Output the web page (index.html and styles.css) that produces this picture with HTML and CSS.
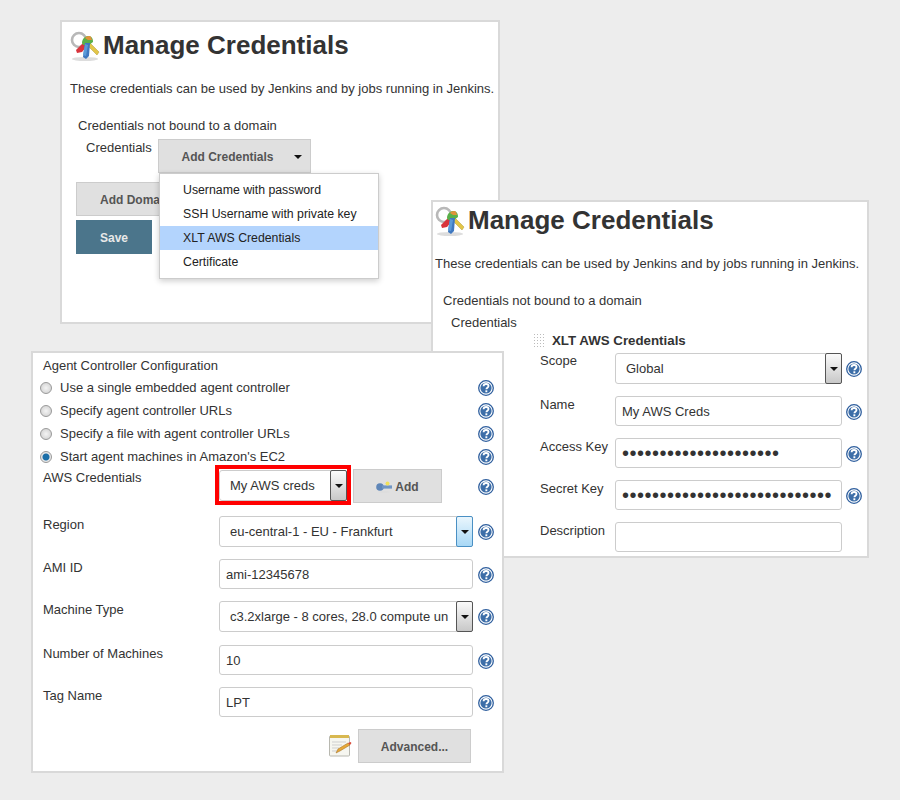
FILE: index.html
```html
<!DOCTYPE html>
<html lang="en">

<head>
    <meta charset="UTF-8">
    <title>Manage Credentials</title>
    <link rel="stylesheet" href="styles.css">
</head>

<body>

    <svg class="defs" width="0" height="0">
        <symbol id="help" viewBox="0 0 16 16">
            <circle cx="8" cy="8" r="7.3" fill="#fff" stroke="#2f5f9e" stroke-width="1.3" />
            <circle cx="8" cy="8" r="5.6" fill="#3d6ea8" />
            <path d="M5.6 6.3c0-1.5 1.1-2.3 2.5-2.3s2.4.8 2.4 2c0 1.8-2.1 1.7-2.1 3.3" fill="none" stroke="#fff" stroke-width="1.8" />
            <rect x="7.4" y="10.3" width="1.9" height="1.9" fill="#fff" />
        </symbol>
        <symbol id="keys" viewBox="0 0 32 32">
            <ellipse cx="15" cy="30" rx="13" ry="2" fill="#ddd" />
            <circle cx="9" cy="11" r="7" fill="none" stroke="#b8b8b8" stroke-width="2.6" />
            <path d="M20 14l9 9-2 3-9-9z" fill="#e3c648" stroke="#b09a30" stroke-width=".5" />
            <path d="M14 13l-8 8 1 3 5-1 6-7z" fill="#d8343c" />
            <path d="M12 14c0-4 3-7 6-7 4 0 5 3 5 6l-4 3-6 0z" fill="#5ab04a" />
            <path d="M15 9c1-2 5-3 6-1l1 3-4 0z" fill="#e0923a" />
            <path d="M15 14l5 0 -1 13-3 3-3-2z" fill="#3f78c0" />
            <path d="M15 15l3 1-2 11-3-1z" fill="#5a9ad8" />
        </symbol>
    </svg>

    <main class="canvas">

        <section class="panel panel-add">
            <h1 class="title"><svg class="title-icon"><use href="#keys" /></svg>Manage Credentials</h1>
            <p class="desc">These credentials can be used by Jenkins and by jobs running in Jenkins.</p>
            <p class="domain">Credentials not bound to a domain</p>
            <div class="cred-line">
                <span class="cred-label">Credentials</span>
                <button class="btn btn-menu" type="button">Add Credentials<span class="caret"></span></button>
            </div>
            <button class="btn btn-domain" type="button">Add Domain</button>
            <button class="btn btn-save" type="button">Save</button>
            <ul class="menu">
                <li>Username with password</li>
                <li>SSH Username with private key</li>
                <li class="active">XLT AWS Credentials</li>
                <li>Certificate</li>
            </ul>
        </section>

        <section class="panel panel-form">
            <h1 class="title"><svg class="title-icon"><use href="#keys" /></svg>Manage Credentials</h1>
            <p class="desc">These credentials can be used by Jenkins and by jobs running in Jenkins.</p>
            <p class="domain">Credentials not bound to a domain</p>
            <div class="cred-line">
                <span class="cred-label">Credentials</span>
            </div>
            <div class="form">
                <div class="form-head"><span class="grip"></span>XLT AWS Credentials</div>
                <div class="field">
                    <label>Scope</label>
                    <div class="select"><span>Global</span><span class="arrow"><span class="caret"></span></span></div>
                    <svg class="help"><use href="#help" /></svg>
                </div>
                <div class="field">
                    <label>Name</label>
                    <input class="input" type="text" value="My AWS Creds">
                    <svg class="help"><use href="#help" /></svg>
                </div>
                <div class="field">
                    <label>Access Key</label>
                    <input class="input secret" type="password" value="xxxxxxxxxxxxxxxxxxxxx">
                    <svg class="help"><use href="#help" /></svg>
                </div>
                <div class="field">
                    <label>Secret Key</label>
                    <input class="input secret" type="password" value="xxxxxxxxxxxxxxxxxxxxxxxxxxxx">
                    <svg class="help"><use href="#help" /></svg>
                </div>
                <div class="field">
                    <label>Description</label>
                    <input class="input" type="text">
                </div>
            </div>
        </section>

        <section class="panel panel-agent">
            <div class="agent-head">Agent Controller Configuration</div>
            <div class="radio-row">
                <span class="radio"></span><span class="radio-text">Use a single embedded agent controller</span>
                <svg class="help"><use href="#help" /></svg>
            </div>
            <div class="radio-row">
                <span class="radio"></span><span class="radio-text">Specify agent controller URLs</span>
                <svg class="help"><use href="#help" /></svg>
            </div>
            <div class="radio-row">
                <span class="radio"></span><span class="radio-text">Specify a file with agent controller URLs</span>
                <svg class="help"><use href="#help" /></svg>
            </div>
            <div class="radio-row">
                <span class="radio checked"></span><span class="radio-text">Start agent machines in Amazon's EC2</span>
                <svg class="help"><use href="#help" /></svg>
            </div>

            <div class="row row-creds">
                <label>AWS Credentials</label>
                <div class="creds-control">
                    <div class="highlight">
                        <div class="select"><span>My AWS creds</span><span class="arrow"><span class="caret"></span></span></div>
                    </div>
                    <button class="btn btn-add" type="button">
                        <svg class="key" viewBox="0 0 16 12">
                            <ellipse cx="8" cy="11" rx="6" ry="1" fill="#ddd" />
                            <circle cx="4" cy="6" r="3.8" fill="#5f86b8" />
                            <rect x="6" y="4.4" width="10" height="3.2" fill="#7096c4" />
                            <circle cx="11.5" cy="2.5" r="2" fill="#f2e25a" />
                        </svg>Add
                    </button>
                </div>
                <svg class="help"><use href="#help" /></svg>
            </div>
            <div class="row row-mid">
                <label>Region</label>
                <div class="select"><span>eu-central-1 - EU - Frankfurt</span><span class="arrow focus"><span class="caret"></span></span></div>
                <svg class="help"><use href="#help" /></svg>
            </div>
            <div class="row">
                <label>AMI ID</label>
                <input class="input" type="text" value="ami-12345678">
                <svg class="help"><use href="#help" /></svg>
            </div>
            <div class="row row-tall">
                <label>Machine Type</label>
                <div class="select"><span>c3.2xlarge - 8 cores, 28.0 compute un</span><span class="arrow"><span class="caret"></span></span></div>
                <svg class="help"><use href="#help" /></svg>
            </div>
            <div class="row">
                <label>Number of Machines</label>
                <input class="input" type="text" value="10">
                <svg class="help"><use href="#help" /></svg>
            </div>
            <div class="row">
                <label>Tag Name</label>
                <input class="input" type="text" value="LPT">
                <svg class="help"><use href="#help" /></svg>
            </div>
            <div class="advanced">
                <svg class="notepad" viewBox="0 0 24 22">
                    <rect x="1.5" y="1" width="20" height="20" rx="1" fill="#f6f6f0" stroke="#b8b8b0" />
                    <rect x="2" y="0" width="19" height="3" fill="#d8b850" />
                    <path d="M4 7h14M4 10h10M4 13h7M4 16h6" stroke="#cfcfcf" stroke-width="1" />
                    <path d="M8 18l2-4 10-6 2 2-10 6z" fill="#e8a838" stroke="#9a6a20" stroke-width=".5" />
                    <path d="M20 8l2 2 1.500-2-1-1z" fill="#d84a3a" />
                </svg>
                <button class="btn btn-advanced" type="button">Advanced...</button>
            </div>
        </section>

    </main>

</body>

</html>
```

FILE: styles.css
```css
* {
    box-sizing: border-box;
    margin: 0;
    padding: 0;
}

body {
    background-color: #ededed;
    color: #333;
    font-family: "Liberation Sans", Arial, sans-serif;
    font-size: 13px;
}

.defs {
    position: absolute;
}

.canvas {
    position: relative;
    width: 900px;
    height: 800px;
    overflow: hidden;
}

/* the three windows sit on a free canvas and overlap */
.panel {
    position: absolute;
    background: white;
    border: 2px solid #d9d9d9;
}

.panel-add {
    left: 60px;
    top: 20px;
    width: 440px;
    height: 304px;
    padding: 7px 0 0 8px;
}

.panel-form {
    left: 431px;
    top: 200px;
    width: 438px;
    height: 358px;
    padding: 2px 0 0 2px;
}

.panel-agent {
    left: 31px;
    top: 351px;
    width: 473px;
    height: 422px;
    padding: 5px 0 0 10px;
}

.title {
    display: flex;
    align-items: center;
    height: 32px;
    font-size: 26px;
    font-weight: bold;
    white-space: nowrap;
}

.title-icon {
    width: 32px;
    height: 32px;
    margin: 0 1px 0 0;
    flex: none;
}

.desc {
    margin-top: 20px;
    line-height: 16px;
    white-space: nowrap;
}

.domain {
    margin: 21px 0 0 8px;
    line-height: 16px;
}

.cred-line {
    display: flex;
    margin: 6px 0 0 16px;
    line-height: 16px;
}

.cred-label {
    width: 72px;
    flex: none;
}

.btn {
    display: block;
    padding-top: 1px;
    background: #e0e0e0;
    border: 1px solid #ccc;
    color: #555;
    font-family: inherit;
    font-size: 12px;
    font-weight: bold;
}

.btn-menu {
    position: relative;
    width: 153px;
    height: 34px;
    margin-top: -1px;
    padding-right: 14px;
}

.btn-menu .caret {
    position: absolute;
    right: 8px;
    top: 15px;
}

.btn-domain {
    width: 160px;
    height: 34px;
    margin: 9px 0 0 6px;
    text-align: left;
    padding-left: 23px;
}

.btn-save {
    width: 76px;
    height: 34px;
    margin: 4px 0 0 6px;
    background: #4b758b;
    border-color: #4b758b;
    color: #e8e8e8;
}

.caret {
    display: inline-block;
    width: 0;
    height: 0;
    border-left: 4px solid transparent;
    border-right: 4px solid transparent;
    border-top: 4px solid #111;
}

.menu {
    position: absolute;
    left: 97px;
    top: 151px;
    width: 220px;
    padding: 4px 0;
    list-style: none;
    background: white;
    border: 1px solid #ccc;
    box-shadow: 0 2px 6px rgba(0, 0, 0, 0.2);
    font-size: 12.3px;
    color: #222;
}

.menu li {
    height: 24px;
    line-height: 24px;
    padding-left: 23px;
}

.menu .active {
    background-color: #b3d4fd;
}

.form {
    margin: 0 0 0 98px;
}

.form-head {
    display: flex;
    align-items: center;
    height: 18px;
    font-size: 13.3px;
    font-weight: bold;
}

.grip {
    width: 12px;
    height: 14px;
    margin-right: 7px;
    background-image: radial-gradient(#bbb 1px, transparent 1px);
    background-size: 3px 3px;
}

.field {
    display: grid;
    grid-template-columns: 75px 227px 16px;
    align-items: start;
    height: 42px;
    margin-left: 7px;
}

.form-head + .field {
    height: 43px;
    margin-top: 4px;
}

.field .help {
    margin-left: 4px;
}

label {
    margin-top: 1px;
    line-height: 16px;
    white-space: nowrap;
}

.form-head + .field label {
    margin-top: 0;
}

.input {
    width: 100%;
    height: 30px;
    padding: 0 6px;
    border: 1px solid #ccc;
    border-radius: 3px;
    color: #333;
    font-family: inherit;
    font-size: 13px;
}

.secret {
    font-size: 20px;
    letter-spacing: 0.5px;
}

.select {
    display: flex;
    align-items: center;
    justify-content: space-between;
    width: 100%;
    height: 31px;
    padding-left: 10px;
    border: 1px solid #ccc;
    border-radius: 3px;
    white-space: nowrap;
    background: white;
}

.arrow {
    display: flex;
    align-items: center;
    justify-content: center;
    width: 17px;
    height: 31px;
    margin: -1px -1px -1px 0;
    flex: none;
    border: 1px solid #555;
    border-radius: 2px;
    background: linear-gradient(#fafafa, #c8c8c8);
}

.arrow.focus {
    border-color: #4a90c4;
    background: linear-gradient(#eaf6fd, #a8d8f6);
}

.help {
    width: 16px;
    height: 16px;
    margin-top: 8px;
}

.agent-head {
    line-height: 16px;
}

.radio-row {
    display: grid;
    grid-template-columns: 20px 417px 16px;
    align-items: center;
    height: 23px;
    margin-left: -3px;
}

.radio-row:nth-child(2) {
    margin-top: 2px;
}

.radio-row .help {
    margin-top: 0;
    margin-left: 1px;
}

.radio {
    width: 12px;
    height: 12px;
    border: 1px solid #999;
    border-radius: 50%;
    background: radial-gradient(#f4f4f4, #ccc);
}

.radio.checked {
    background: radial-gradient(#1c6fa8 0 3px, #e8e8e8 4px);
}

.row {
    display: grid;
    grid-template-columns: 176px 254px 21px;
    align-items: start;
    height: 42px;
}

.row .help {
    margin-left: 5px;
}

.row-mid {
    height: 43px;
}

.row-tall {
    height: 44px;
}

.row-creds {
    height: 51px;
    margin-top: -3px;
}

.row-creds label {
    margin-top: 5px;
}

.row-creds .help {
    margin-top: 14px;
}

.creds-control {
    display: flex;
    align-items: center;
    margin-left: -4px;
}

.highlight {
    width: 136px;
    height: 40px;
    padding-top: 1px;
    border: 4px solid #f00;
    flex: none;
}

.btn-add {
    display: flex;
    align-items: center;
    justify-content: center;
    width: 89px;
    height: 34px;
    margin: 2px 0 0 2px;
}

.key {
    width: 16px;
    height: 12px;
    margin-right: 3px;
}

.advanced {
    display: flex;
    align-items: center;
    margin-left: 285px;
}

.notepad {
    width: 24px;
    height: 22px;
    margin-right: 6px;
}

.btn-advanced {
    width: 113px;
    height: 34px;
}
```
